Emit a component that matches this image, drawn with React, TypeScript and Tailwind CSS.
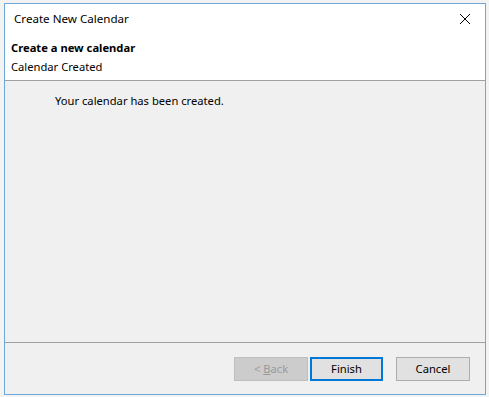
import React from "react";

export default function App() {
  const font = { fontFamily: '"Noto Sans", "Open Sans", sans-serif' };
  return (
    <div
      className="w-[489px] h-[397px] bg-[#f3f3f3] pt-[3px] pl-[4px] overflow-hidden text-[11.2px] text-black"
      style={font}
    >
      <div className="w-[482px] h-[392px] border border-[#6fa8d8] flex flex-col bg-[#f0f0f0]">
        {/* title bar */}
        <div className="h-[29px] shrink-0 bg-white flex items-center justify-between pl-[9px] pr-[14px]">
          <span className="text-[11.6px] leading-none">Create New Calendar</span>
          <svg width="12" height="12" viewBox="0 0 12 12">
            <path d="M1 1 L11 11 M11 1 L1 11" stroke="#000" strokeWidth="1" />
          </svg>
        </div>
        {/* header */}
        <div className="h-[48px] shrink-0 bg-white border-b border-[#a0a0a0] flex flex-col pl-[6px] pt-[6px]">
          <span className="font-bold leading-[18px]">Create a new calendar</span>
          <span className="leading-[18px] mt-[1px]">Calendar Created</span>
        </div>
        {/* content */}
        <div className="flex-1 pl-[50px] pt-[11px]">
          <span className="leading-[18px]">Your calendar has been created.</span>
        </div>
        {/* footer */}
        <div className="border-t border-[#a0a0a0] h-[52px] shrink-0 flex items-start justify-end gap-[2px] pt-[14px] pr-[15px]">
          <button className="w-[74px] h-[24px] bg-[#cccccc] border border-[#bfbfbf] text-[#9a9a9a] leading-none">
            &lt; <span className="underline">B</span>ack
          </button>
          <button className="w-[73px] h-[24px] bg-[#e1e1e1] border-2 border-[#0078d7] leading-none">
            Finish
          </button>
          <button className="ml-[11px] w-[74px] h-[24px] bg-[#e1e1e1] border border-[#adadad] leading-none">
            Cancel
          </button>
        </div>
      </div>
    </div>
  );
}
